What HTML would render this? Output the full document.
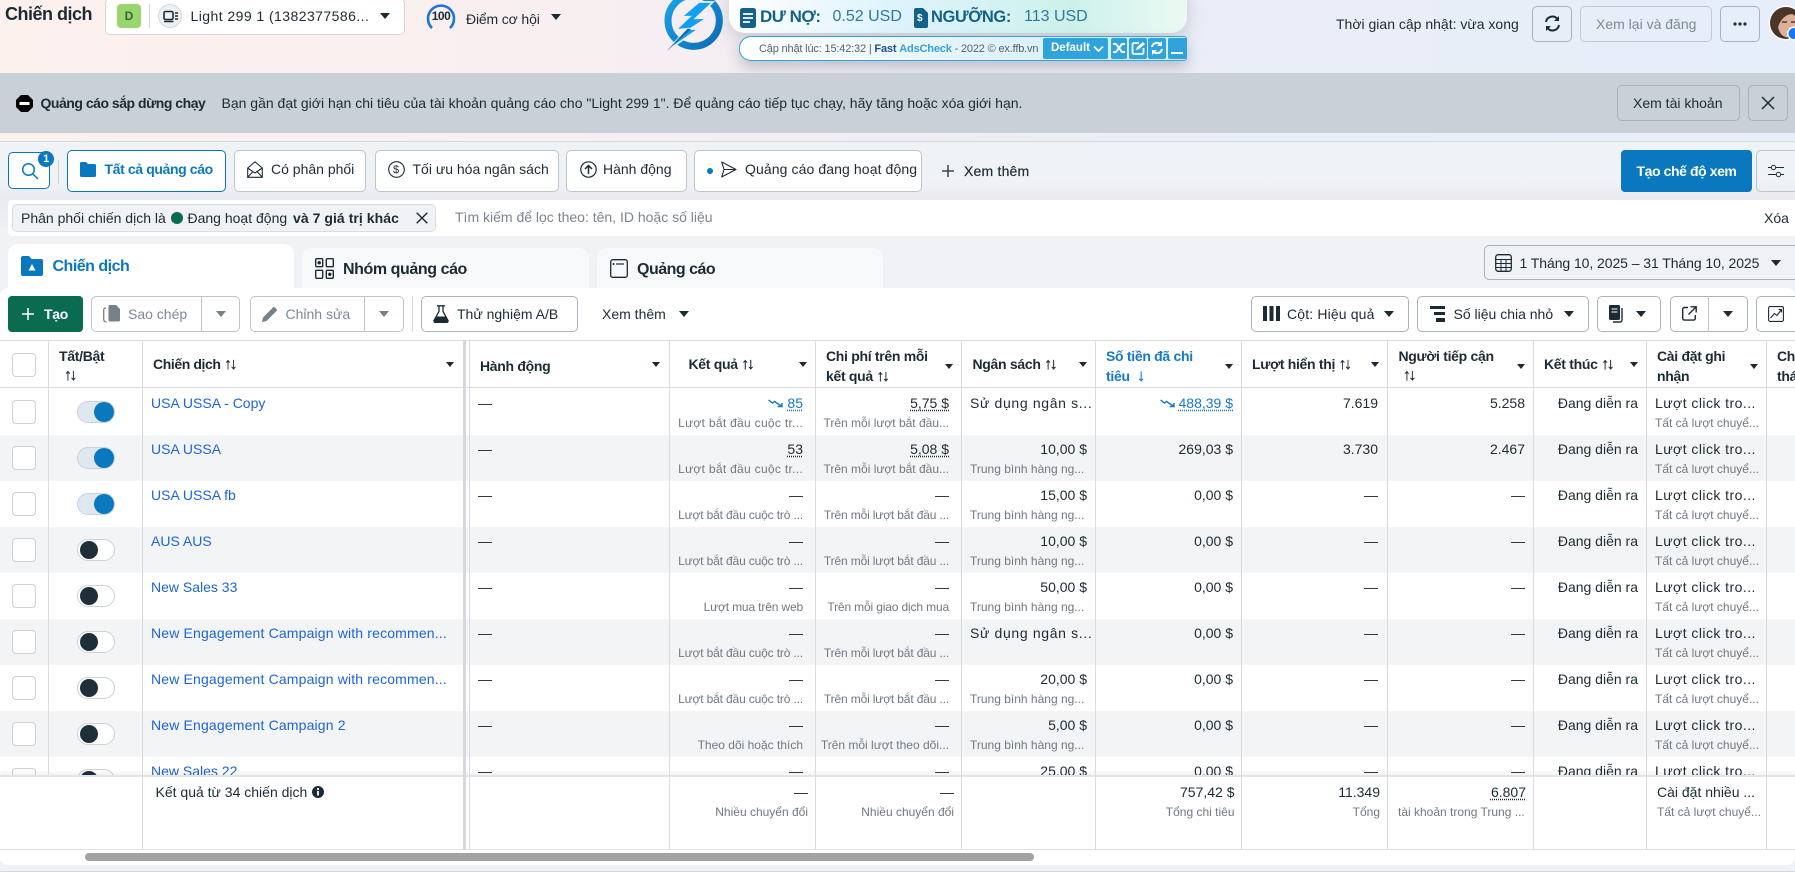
<!DOCTYPE html>
<html lang="vi"><head><meta charset="utf-8"><title>Chiến dịch</title>
<style>
*{box-sizing:border-box}
html,body{margin:0;padding:0}
body{width:1795px;height:872px;overflow:hidden;position:relative;font-family:"Liberation Sans","Noto Sans CJK SC",sans-serif;font-size:14px;color:#1c2b33;background:#f0f2f5}
.abs,.t,.b,svg.i,.ar{position:absolute}
.t{white-space:nowrap;line-height:20px}
.bd{font-weight:700;letter-spacing:-.3px}
.b{border:1px solid #bcc4cc;border-radius:5px;background:#fff}
.ar{width:0;height:0;border-left:5.5px solid transparent;border-right:5.5px solid transparent;border-top:6px solid #1c2b33}
.ar.s{border-left-width:4.5px;border-right-width:4.5px;border-top-width:5px}
.ar.g{border-top-color:#77818b}
.g{color:#7f8992}
.so{letter-spacing:-2.5px;font-weight:400;font-size:16px;line-height:1;-webkit-text-stroke:.3px #1c2b33}
.r{position:absolute;left:0;width:1795px;height:46px;background:#fff}
.r.e{background:#f3f4f6}
.r>*{position:absolute;white-space:nowrap}
.m{top:4px;line-height:20px}
.u{top:26px;line-height:16px;font-size:12px;color:#6f7982}
.c{left:12px;top:11px;width:24px;height:24px;border:1px solid #ccd2d8;border-radius:4px;background:#fff}
.tg{left:77px;top:12px;width:38px;height:22px;border-radius:11px;border:1px solid #cbd2d9;background:#fff}
.tg i{position:absolute;top:1px;left:2px;width:18px;height:18px;border-radius:50%;background:#1f2f3a}
.tg.on{background:#dfe8f1}
.tg.on i{left:16px;width:20px;height:20px;top:0;background:#0a78be}
.r.f .m{top:5px}.r.f .u{top:27px}.r.f .c{top:12px}.r.f .tg{top:13px}
.n{left:151px;color:#1d64d8}
.ne{letter-spacing:.16px}
.d{left:478px}
.c1{right:992px}.c2{right:846px}.c3{right:708px}.c4{right:562px}.c5{right:417px}.c6{right:270px}.c7{right:157px}
.l3{left:970px}.l8{left:1655px}
.m.l3{letter-spacing:.65px}
.m.l8{letter-spacing:.45px}
.w{letter-spacing:.3px}
.v{letter-spacing:-.15px}
u{text-decoration:underline dotted;text-underline-offset:2px}
.bl{color:#1878c8}
.ln{position:absolute;top:340px;height:510px;width:1px;background:#d9dce0;z-index:5}
.ft{position:absolute;white-space:nowrap;line-height:20px;z-index:4}
.fs{position:absolute;white-space:nowrap;line-height:16px;font-size:12px;color:#6f7982;z-index:4}
</style></head><body>

<!-- top gradient -->
<div class="abs" style="left:0;top:0;width:1795px;height:141px;background:linear-gradient(90deg,#fdf1ee 0,#f9eff0 30%,#f0edf5 50%,#eaeef8 70%,#e6eef9 100%)"></div>

<div class="t bd" style="left:5px;top:3px;font-size:18px;line-height:22px;letter-spacing:-.5px">Chiến dịch</div>

<div class="b" style="left:105px;top:-2px;width:300px;height:37px;border-radius:5px;border-color:#d3d8de"></div>
<div class="abs" style="left:117px;top:4px;width:24px;height:24px;border-radius:4px;background:#9ad56e;color:#2f6b3a;font-weight:700;font-size:12px;text-align:center;line-height:24px">D</div>
<div class="abs" style="left:149px;top:4px;width:1px;height:24px;background:#d3d8de"></div>
<div class="abs" style="left:158px;top:4px;width:24px;height:24px;border-radius:50%;background:#edf0f3;border:1px solid #d3d8de"></div>
<svg class="i" style="left:163px;top:10px" width="15" height="13" viewBox="0 0 15 13"><rect x="1" y="1.500" width="9" height="8" rx="1.500" fill="none" stroke="#1c2b33" stroke-width="1.600"/><path d="M1 11.500h9.500M12 3h3M12 6h3M12 9h3" stroke="#1c2b33" stroke-width="1.400"/></svg>
<div class="t" style="left:190.500px;top:6px;letter-spacing:.44px">Light 299 1 (1382377586...</div>
<div class="ar" style="left:380px;top:13px"></div>

<svg class="i" style="left:426px;top:0" width="30" height="32" viewBox="0 0 30 32"><path d="M6 28 A13 13 0 1 1 24 28" fill="none" stroke="#1877d8" stroke-width="2.600"/></svg>
<div class="t bd" style="left:429px;top:6px;width:24px;text-align:center;font-size:12px;letter-spacing:-.5px">100</div>
<div class="t" style="left:466px;top:9px;letter-spacing:-.15px">Điểm cơ hội</div>
<div class="ar" style="left:551px;top:14px"></div>

<!-- bolt logo -->
<svg class="i" style="left:655px;top:0;z-index:3" width="80" height="56" viewBox="0 0 240 168">
<defs><linearGradient id="gr" x1="0" y1="0" x2="1" y2="1"><stop offset="0" stop-color="#1ba4ea"/><stop offset="1" stop-color="#0c6cb4"/></linearGradient></defs>
<circle cx="116" cy="62" r="77" fill="none" stroke="url(#gr)" stroke-width="21"/>
<path d="M132 6 L80 50 L104 50 L62 90 L98 86 L34 154 L132 86 L104 88 L156 54 L122 55 L174 6Z" fill="#12a0ee" stroke="#f1edf5" stroke-width="5" stroke-linejoin="miter"/>
<path d="M34 154 L98 86 L108 88Z" fill="#0c6cb4"/>
</svg>

<!-- panel -->
<div class="abs" style="left:729px;top:-10px;width:458px;height:43px;border-radius:0 0 16px 16px;background:linear-gradient(90deg,#fff 0,#dff3fd 35%,#cdf1ea 75%,#eafaf3 100%);box-shadow:0 6px 18px rgba(80,90,110,.25)"></div>
<svg class="i" style="left:740px;top:8px" width="16" height="20" viewBox="0 0 16 20"><rect width="16" height="20" rx="2.500" fill="#14628a"/><path d="M3 6h10M3 10h10M3 14h7" stroke="#fff" stroke-width="1.800"/></svg>
<div class="t bd" style="left:760px;top:7px;font-size:17px;color:#14628a;letter-spacing:-.5px">DƯ NỢ:</div>
<div class="t" style="left:832.500px;top:7px;font-size:16px;color:#2b7a9f">0.52 USD</div>
<svg class="i" style="left:914px;top:8px" width="14" height="20" viewBox="0 0 14 20"><path d="M2 0h7l5 5v13a2 2 0 0 1-2 2H2a2 2 0 0 1-2-2V2a2 2 0 0 1 2-2z" fill="#14628a"/></svg>
<div class="t" style="left:917px;top:12px;font-size:10px;line-height:14px;color:#fff;font-weight:700">$</div>
<div class="t bd" style="left:931px;top:7px;font-size:16.500px;color:#14628a;letter-spacing:-.4px">NGƯỠNG:</div>
<div class="t" style="left:1024px;top:7px;font-size:16px;color:#2b7a9f">113 USD</div>

<!-- adscheck bar -->
<div class="abs" style="left:738.500px;top:36px;width:448.500px;height:25px;border:1.500px solid #2fa3dc;border-radius:12px 3px 3px 12px;background:linear-gradient(90deg,#fff 0,#dff2fb 60%,#d3edf9 100%);box-shadow:0 7px 14px rgba(80,90,110,.3)"></div>
<div class="t" style="left:759px;top:39px;font-size:11px;color:#56626d;letter-spacing:-.17px">Cập nhật lúc: 15:42:32 | <b style="color:#23527c">Fast</b> <b style="color:#2fa3dc">AdsCheck</b> - 2022 © ex.ffb.vn</div>
<div class="abs" style="left:1043px;top:38px;width:65px;height:21px;background:#2fa3dc;border-radius:2px;color:#fff;font-size:11.500px;font-weight:700;line-height:20px;padding-left:8px">Default</div>
<svg class="i" style="left:1093px;top:45px" width="11" height="8" viewBox="0 0 11 8"><path d="M1 1.500l4.500 4.500 4.500-4.500" fill="none" stroke="#fff" stroke-width="1.800"/></svg>
<div class="abs" style="left:1111px;top:38px;width:15.500px;height:21px;background:#2fa3dc;border-radius:2px"></div>
<svg class="i" style="left:1112px;top:41px" width="14" height="14" viewBox="0 0 14 14"><path d="M1 3h3l6 8h3M1 11h3l6-8h3" fill="none" stroke="#fff" stroke-width="2"/></svg>
<div class="abs" style="left:1128.500px;top:38px;width:18px;height:21px;background:#2fa3dc;border-radius:2px"></div>
<svg class="i" style="left:1131px;top:41px" width="14" height="14" viewBox="0 0 14 14"><path d="M8 2H3a1.500 1.500 0 0 0-1.500 1.500v8A1.500 1.500 0 0 0 3 13h8a1.500 1.500 0 0 0 1.500-1.500V7" fill="none" stroke="#fff" stroke-width="1.800"/><path d="M5 9l1-3 6-5 2 2-6 5z" fill="#fff"/></svg>
<div class="abs" style="left:1148px;top:38px;width:18px;height:21px;background:#2fa3dc;border-radius:2px"></div>
<svg class="i" style="left:1150px;top:41px" width="14" height="14" viewBox="0 0 14 14"><path d="M2 6a5 5 0 0 1 9-2M12 8a5 5 0 0 1-9 2" fill="none" stroke="#fff" stroke-width="2"/><path d="M12 0v5H7zM2 14V9h5z" fill="#fff"/></svg>
<div class="abs" style="left:1168px;top:38px;width:18.500px;height:21px;background:#2fa3dc;border-radius:2px"></div>
<div class="abs" style="left:1171px;top:52px;width:12px;height:2px;background:#fff"></div>

<!-- top right -->
<div class="t" style="left:1336px;top:14px">Thời gian cập nhật: vừa xong</div>
<div class="b" style="left:1532px;top:6px;width:40px;height:36px;background:transparent;border-color:#aab3bc"></div>
<svg class="i" style="left:1544px;top:15px" width="17" height="17" viewBox="0 0 17 17"><path d="M2 7a6.500 6.500 0 0 1 11.500-3M15 10a6.500 6.500 0 0 1-11.500 3" fill="none" stroke="#1c2b33" stroke-width="2"/><path d="M15 1v5h-5zM2 16v-5h5z" fill="#1c2b33"/></svg>
<div class="b" style="left:1580px;top:6px;width:132px;height:36px;background:transparent;border-color:#c3cad2"></div>
<div class="t g" style="left:1596px;top:14px">Xem lại và đăng</div>
<div class="b" style="left:1720px;top:6px;width:40px;height:36px;background:transparent;border-color:#aab3bc"></div>
<svg class="i" style="left:1733px;top:22px" width="14" height="4" viewBox="0 0 14 4"><circle cx="2" cy="2" r="1.600" fill="#1c2b33"/><circle cx="7" cy="2" r="1.600" fill="#1c2b33"/><circle cx="12" cy="2" r="1.600" fill="#1c2b33"/></svg>
<svg class="i" style="left:1768px;top:5px" width="27" height="38" viewBox="0 0 27 38"><circle cx="18" cy="18" r="17.500" fill="#fff"/><circle cx="18" cy="18" r="16" fill="#4a3427"/><ellipse cx="20" cy="20" rx="10" ry="12.500" fill="#dcb199"/><path d="M3 18C5 4 26 0 31 12 25 7 15 8 10 22 8 26 5 26 3 18z" fill="#4d3525"/><path d="M14 17h5M23 17h5" stroke="#5b3a27" stroke-width="1.500"/><circle cx="26" cy="28.500" r="7" fill="#fff"/><circle cx="26" cy="28.500" r="5.500" fill="#1877f2"/></svg>

<!-- banner -->
<div class="abs" style="left:0;top:73px;width:1795px;height:60px;background:#c9d0d8"></div>
<svg class="i" style="left:16px;top:95px" width="17" height="17" viewBox="0 0 17 17"><path d="M5 0h7l5 5v7l-5 5H5l-5-5V5z" fill="#000"/><rect x="3.500" y="7" width="10" height="3" fill="#fff"/></svg>
<div class="t bd" style="left:40.500px;top:93px;letter-spacing:-.48px">Quảng cáo sắp dừng chạy</div>
<div class="t" style="left:221.500px;top:93px">Bạn gần đạt giới hạn chi tiêu của tài khoản quảng cáo cho "Light 299 1". Để quảng cáo tiếp tục chạy, hãy tăng hoặc xóa giới hạn.</div>
<div class="b" style="left:1617px;top:85px;width:123px;height:36px;background:transparent;border-color:#aab3bc"></div>
<div class="t" style="left:1633px;top:93px">Xem tài khoản</div>
<div class="b" style="left:1748px;top:85px;width:40px;height:36px;background:transparent;border-color:#aab3bc"></div>
<svg class="i" style="left:1761px;top:96px" width="14" height="14" viewBox="0 0 14 14"><path d="M1 1l12 12M13 1L1 13" stroke="#1c2b33" stroke-width="1.500"/></svg>

<!-- toolbar section -->
<div class="abs" style="left:0;top:141px;width:1795px;height:147px;background:linear-gradient(180deg,#f0f3f6 0,#f0f3f6 25%,#e9ebf2 40%,#f0f2f5 65%,#f0f2f5 100%);border-top:1px solid #d5d9de"></div>

<div class="b" style="left:8px;top:152px;width:42px;height:37px;border-color:#0a78be;background:#fff"></div>
<svg class="i" style="left:21px;top:162px" width="18" height="18" viewBox="0 0 18 18"><circle cx="7.500" cy="7.500" r="5.800" fill="none" stroke="#0a78be" stroke-width="1.500"/><path d="M12 12l5 5" stroke="#0a78be" stroke-width="1.500"/></svg>
<div class="abs bd" style="left:38px;top:151px;width:16px;height:16px;border-radius:50%;background:#0a78be;color:#fff;font-size:11px;line-height:16px;text-align:center">1</div>
<div class="abs" style="left:58px;top:160px;width:1px;height:24px;background:#d0d5db"></div>

<div class="b" style="left:67px;top:150px;width:159px;height:42px;border-color:#0a78be"></div>
<svg class="i" style="left:80px;top:162px" width="16" height="15" viewBox="0 0 16 15"><path d="M1.500 0H6l2 2h6.500A1.500 1.500 0 0 1 16 3.500v10a1.500 1.500 0 0 1-1.500 1.500h-13A1.500 1.500 0 0 1 0 13.500v-12A1.500 1.500 0 0 1 1.500 0z" fill="#0a78be"/></svg>
<div class="t bd" style="left:104.500px;top:159px;color:#0a78be;letter-spacing:-.38px">Tất cả quảng cáo</div>

<div class="b" style="left:234px;top:150px;width:132px;height:42px"></div>
<svg class="i" style="left:247px;top:161px" width="16" height="17" viewBox="0 0 16 17"><path d="M.7 7L8 .8 15.300 7v9.300H.7zM.7 7l7.300 5 7.300-5M.7 16.300L6 10.500M15.300 16.300L10 10.500" fill="none" stroke="#1c2b33" stroke-width="1.100"/></svg>
<div class="t" style="left:271px;top:159px">Có phân phối</div>

<div class="b" style="left:375px;top:150px;width:184px;height:42px"></div>
<svg class="i" style="left:388px;top:161px" width="17" height="17" viewBox="0 0 17 17"><circle cx="8.500" cy="8.500" r="7.800" fill="none" stroke="#1c2b33" stroke-width="1.100"/></svg>
<div class="t" style="left:393px;top:160px;font-size:11px">$</div>
<div class="t" style="left:412.500px;top:159px">Tối ưu hóa ngân sách</div>

<div class="b" style="left:565.500px;top:150px;width:121.500px;height:42px"></div>
<svg class="i" style="left:580px;top:161px" width="17" height="17" viewBox="0 0 17 17"><circle cx="8.500" cy="8.500" r="7.700" fill="none" stroke="#1c2b33" stroke-width="1.200"/><path d="M8.500 13V5M5 8l3.500-3.500L12 8" fill="none" stroke="#1c2b33" stroke-width="1.500"/></svg>
<div class="t" style="left:603px;top:159px">Hành động</div>

<div class="b" style="left:694px;top:150px;width:227.500px;height:42px"></div>
<div class="abs" style="left:707px;top:168px;width:6px;height:6px;border-radius:50%;background:#0a78be"></div>
<svg class="i" style="left:721px;top:161px" width="16" height="17" viewBox="0 0 16 17"><path d="M.7 1L15 8.500.7 16l2.300-7.500zM3 8.500h12" fill="none" stroke="#1c2b33" stroke-width="1.100" stroke-linejoin="round"/></svg>
<div class="t" style="left:745px;top:159px;letter-spacing:.1px">Quảng cáo đang hoạt động</div>

<svg class="i" style="left:942px;top:165px" width="12" height="12" viewBox="0 0 12 12"><path d="M6 0v12M0 6h12" stroke="#1c2b33" stroke-width="1.300"/></svg>
<div class="t" style="left:964px;top:161px;letter-spacing:.2px;-webkit-text-stroke:.2px #1c2b33">Xem thêm</div>

<div class="abs bd" style="left:1621px;top:150px;width:131px;height:42px;border-radius:4px;background:#0a78be;color:#fff;text-align:center;line-height:42px;letter-spacing:-.42px">Tạo chế độ xem</div>
<div class="b" style="left:1756px;top:150px;width:44px;height:42px;background:transparent"></div>
<svg class="i" style="left:1768px;top:164px" width="16" height="14" viewBox="0 0 16 14"><path d="M0 3.500h3M8 3.500h8M0 10.500h8M13 10.500h3" stroke="#1c2b33" stroke-width="1"/><circle cx="5.500" cy="3.500" r="2.200" fill="none" stroke="#1c2b33"/><circle cx="10.500" cy="10.500" r="2.200" fill="none" stroke="#1c2b33"/></svg>

<!-- filter -->
<div class="abs" style="left:8px;top:200px;width:1787px;height:36px;background:#fff;border-radius:4px 0 0 4px"></div>
<div class="abs" style="left:12px;top:204px;width:424px;height:28px;background:#f0f2f5;border:1px solid #dadde1;border-radius:5px"></div>
<div class="t" style="left:21px;top:208px">Phân phối chiến dịch là</div>
<div class="abs" style="left:171px;top:212px;width:12px;height:12px;border-radius:50%;background:#0a6b4e"></div>
<div class="t" style="left:187.500px;top:208px">Đang hoạt động</div>
<div class="t bd" style="left:293px;top:208px;letter-spacing:.05px">và 7 giá trị khác</div>
<svg class="i" style="left:416px;top:212px" width="12" height="12" viewBox="0 0 12 12"><path d="M.7.7l10.600 10.600M11.300.7L.7 11.300" stroke="#1c2b33" stroke-width="1.400"/></svg>
<div class="t" style="left:455px;top:207px;color:#7b8590">Tìm kiếm để lọc theo: tên, ID hoặc số liệu</div>
<div class="t" style="left:1764px;top:208px">Xóa</div>

<!-- main tabs -->
<div class="abs" style="left:8px;top:244px;width:286px;height:50px;background:#fff;border-radius:10px 10px 0 0"></div>
<svg class="i" style="left:21px;top:256px" width="22" height="20" viewBox="0 0 22 20"><path d="M2 0h6l2.500 3H20a2 2 0 0 1 2 2v13a2 2 0 0 1-2 2H2a2 2 0 0 1-2-2V2a2 2 0 0 1 2-2z" fill="#0a78be"/><path d="M11 8l3.500 6.500h-7z" fill="#fff"/></svg>
<div class="t bd" style="left:52.500px;top:257px;font-size:16px;color:#0a78be;letter-spacing:-.5px">Chiến dịch</div>
<div class="abs" style="left:302px;top:248px;width:286.500px;height:46px;background:#f8f9fb;border-radius:10px 10px 0 0"></div>
<svg class="i" style="left:315px;top:258px" width="19" height="21" viewBox="0 0 19 21"><g fill="none" stroke="#1c2b33" stroke-width="1.400"><rect x=".7" y=".7" width="7" height="8" rx="1"/><rect x="11.300" y=".7" width="7" height="8" rx="1"/><rect x=".7" y="12.300" width="7" height="8" rx="1"/><rect x="11.300" y="12.300" width="7" height="8" rx="1"/></g><circle cx="4.200" cy="4.700" r="1.700" fill="#1c2b33"/><circle cx="14.800" cy="16.300" r="1.700" fill="#1c2b33"/></svg>
<div class="t bd" style="left:343px;top:260px;font-size:16px;letter-spacing:-.42px">Nhóm quảng cáo</div>
<div class="abs" style="left:597px;top:248px;width:286px;height:46px;background:#f8f9fb;border-radius:10px 10px 0 0"></div>
<svg class="i" style="left:610px;top:259px" width="18" height="19" viewBox="0 0 18 19"><rect x=".7" y=".7" width="16.600" height="17.600" rx="2" fill="none" stroke="#1c2b33" stroke-width="1.300"/><path d="M6 5h8" stroke="#1c2b33" stroke-width="1.200"/><circle cx="3.500" cy="5" r="1" fill="#1c2b33"/></svg>
<div class="t bd" style="left:637px;top:260px;font-size:16px;letter-spacing:-.5px">Quảng cáo</div>
<div class="b" style="left:1483.500px;top:245px;width:320px;height:35px;background:transparent;border-color:#aab3bc"></div>
<svg class="i" style="left:1495px;top:254px" width="17" height="18" viewBox="0 0 17 18"><rect x=".7" y=".7" width="15.600" height="16.600" rx="2.500" fill="none" stroke="#1c2b33" stroke-width="1.300"/><path d="M1 5.500h15M1 9.500h15M1 13.500h15M6 5.500v12M11 5.500v12" stroke="#1c2b33" stroke-width="1"/></svg>
<div class="t" style="left:1519.500px;top:253px;letter-spacing:-.07px">1 Tháng 10, 2025 – 31 Tháng 10, 2025</div>
<div class="ar" style="left:1771px;top:260px"></div>

<!-- white content -->
<div class="abs" style="left:0;top:288px;width:1795px;height:577px;background:#fff;border-radius:8px"></div>

<!-- action row -->
<div class="abs" style="left:8px;top:296px;width:75px;height:36px;border-radius:4px;background:#0a6b4e"></div>
<svg class="i" style="left:21.500px;top:308px" width="12" height="12" viewBox="0 0 12 12"><path d="M6 0v12M0 6h12" stroke="#fff" stroke-width="1.500"/></svg>
<div class="t bd" style="left:44px;top:304px;color:#fff">Tạo</div>

<div class="b" style="left:91px;top:296px;width:149px;height:36px"></div>
<div class="abs" style="left:201px;top:296px;width:1px;height:36px;background:#bcc4cc"></div>
<svg class="i" style="left:103px;top:305px" width="18" height="18" viewBox="0 0 18 18"><path d="M7 0h6l4 4v11a1.500 1.500 0 0 1-1.500 1.500H7a1.500 1.500 0 0 1-1.500-1.500V1.500A1.500 1.500 0 0 1 7 0z" fill="#77818b"/><path d="M3 3C1 3 .7 4 .7 5v9c0 2 1 3 3 3" fill="none" stroke="#77818b" stroke-width="1.300"/></svg>
<div class="t g" style="left:128px;top:304px">Sao chép</div>
<div class="ar g" style="left:215.500px;top:311px"></div>

<div class="b" style="left:249.500px;top:296px;width:154px;height:36px"></div>
<div class="abs" style="left:364px;top:296px;width:1px;height:36px;background:#bcc4cc"></div>
<svg class="i" style="left:262px;top:306px" width="16" height="16" viewBox="0 0 16 16"><path d="M0 16l1-4.500L11 1.500a1.500 1.500 0 0 1 2 0l1.500 1.500a1.500 1.500 0 0 1 0 2L4.500 15z" fill="#77818b"/></svg>
<div class="t g" style="left:285.500px;top:304px">Chỉnh sửa</div>
<div class="ar g" style="left:378.500px;top:311px"></div>
<div class="abs" style="left:412px;top:296px;width:1px;height:36px;background:#d8dce0"></div>

<div class="b" style="left:421px;top:296px;width:157px;height:36px;border-color:#aab3bc"></div>
<svg class="i" style="left:433px;top:305px" width="16" height="18" viewBox="0 0 16 18"><path d="M4 .8h8M6 1v5.500L1 15.500A1.500 1.500 0 0 0 2.300 17.500h11.400A1.500 1.500 0 0 0 15 15.500L10 6.500V1" fill="none" stroke="#1c2b33" stroke-width="1.300"/><path d="M3.500 11.500h9L15 16a1 1 0 0 1-1 1.500H2A1 1 0 0 1 1 16z" fill="#1c2b33"/></svg>
<div class="t" style="left:457px;top:304px">Thử nghiệm A/B</div>
<div class="t" style="left:602px;top:304px">Xem thêm</div>
<div class="ar" style="left:678.500px;top:311px"></div>

<div class="b" style="left:1251px;top:296px;width:158px;height:36px;border-color:#aab3bc"></div>
<svg class="i" style="left:1262.500px;top:306px" width="17" height="15" viewBox="0 0 17 15"><path d="M0 0h4v15H0zM6.500 0h4v15h-4zM13 0h4v15h-4z" fill="#1c2b33"/></svg>
<div class="t" style="left:1287px;top:304px;letter-spacing:.15px">Cột: Hiệu quả</div>
<div class="ar" style="left:1383.500px;top:311px"></div>

<div class="b" style="left:1417px;top:296px;width:172px;height:36px;border-color:#aab3bc"></div>
<svg class="i" style="left:1430px;top:306px" width="15" height="16" viewBox="0 0 15 16"><path d="M0 0h15v3H0zM4 6h11v3H4zM6 12h9v4H6z" fill="#1c2b33"/></svg>
<div class="t" style="left:1453.500px;top:304px">Số liệu chia nhỏ</div>
<div class="ar" style="left:1563.500px;top:311px"></div>

<div class="b" style="left:1597px;top:296px;width:64px;height:36px;border-color:#aab3bc"></div>
<svg class="i" style="left:1609px;top:305px" width="16" height="18" viewBox="0 0 16 18"><rect x="0" y="0" width="11" height="15" rx="1.500" fill="#1c2b33"/><path d="M2.500 4h6M2.500 7h6" stroke="#fff"/><path d="M13 3v12a2 2 0 0 1-2 2H4" fill="none" stroke="#1c2b33" stroke-width="1.400"/></svg>
<div class="ar" style="left:1635.500px;top:311px"></div>

<div class="b" style="left:1669.500px;top:296px;width:78px;height:36px;border-color:#aab3bc"></div>
<div class="abs" style="left:1708px;top:296px;width:1px;height:36px;background:#bcc4cc"></div>
<svg class="i" style="left:1682px;top:306px" width="15" height="15" viewBox="0 0 15 15"><path d="M6 1.500H2.500a1.800 1.800 0 0 0-1.800 1.800v9a1.800 1.800 0 0 0 1.800 1.800h9a1.800 1.800 0 0 0 1.800-1.800V9M8.500.8h5.700v5.700M14 1L6.500 8.500" fill="none" stroke="#1c2b33" stroke-width="1.400"/></svg>
<div class="ar" style="left:1722.500px;top:311px"></div>

<div class="b" style="left:1756px;top:296px;width:44px;height:36px;border-color:#aab3bc"></div>
<svg class="i" style="left:1768px;top:306px" width="16" height="16" viewBox="0 0 16 16"><rect x=".6" y=".6" width="14.800" height="14.800" rx="1.500" fill="none" stroke="#1c2b33" stroke-width="1.100"/><path d="M2.500 12l4-4.500 2.500 2 4.500-6M10.500 3.500h3v3" fill="none" stroke="#1c2b33" stroke-width="1.100"/></svg>

<!-- table header -->
<div class="abs" style="left:0;top:340px;width:1795px;height:48px;border-top:1px solid #d9dce0;border-bottom:1px solid #d9dce0;background:#fff"></div>
<div class="c abs" style="top:353px"></div>
<div class="t bd" style="left:59px;top:346px">Tất/Bật</div>
<div class="t so" style="left:64px;top:366px;line-height:20px">↑↓</div>
<div class="t bd" style="left:153px;top:354px;letter-spacing:-.4px">Chiến dịch <span class="so">↑↓</span></div>
<div class="ar s" style="left:446px;top:362px"></div>
<div class="t bd" style="left:480px;top:356px">Hành động</div>
<div class="ar s" style="left:652px;top:362px"></div>
<div class="t bd" style="left:688.500px;top:354px">Kết quả <span class="so">↑↓</span></div>
<div class="ar s" style="left:799px;top:362px"></div>
<div class="t bd" style="left:826px;top:346px">Chi phí trên mỗi</div>
<div class="t bd" style="left:826px;top:366px">kết quả <span class="so">↑↓</span></div>
<div class="ar s" style="left:945px;top:364px"></div>
<div class="t bd" style="left:972.500px;top:354px">Ngân sách <span class="so">↑↓</span></div>
<div class="ar s" style="left:1079px;top:362px"></div>
<div class="t bd" style="left:1106px;top:346px;color:#1878c8">Số tiền đã chi</div>
<div class="t bd" style="left:1106px;top:366px;color:#1878c8">tiêu&nbsp; <span style="font-size:17px;font-weight:400;line-height:1;-webkit-text-stroke:.3px #1878c8">↓</span></div>
<div class="ar s" style="left:1225px;top:364px"></div>
<div class="t bd" style="left:1252px;top:354px">Lượt hiển thị <span class="so">↑↓</span></div>
<div class="ar s" style="left:1371px;top:362px"></div>
<div class="t bd" style="left:1398.500px;top:346px">Người tiếp cận</div>
<div class="t so" style="left:1403px;top:366px;line-height:20px">↑↓</div>
<div class="ar s" style="left:1517px;top:364px"></div>
<div class="t bd" style="left:1544px;top:354px">Kết thúc <span class="so">↑↓</span></div>
<div class="ar s" style="left:1630px;top:362px"></div>
<div class="t bd" style="left:1657px;top:346px">Cài đặt ghi</div>
<div class="t bd" style="left:1657px;top:366px">nhận</div>
<div class="ar s" style="left:1750px;top:364px"></div>
<div class="t bd" style="left:1777px;top:346px">Ch</div>
<div class="t bd" style="left:1777px;top:366px">thá</div>

<!-- rows -->
<div class="abs" style="left:0;top:388px;width:1795px;height:387px;overflow:hidden">

<div class="r f" style="top:0;height:47px"><div class="c"></div><div class="tg on"><i></i></div><span class="m n">USA USSA - Copy</span><span class="m d">—</span>
<span class="m c1 bl"><svg width="15" height="9" viewBox="0 0 15 9" style="margin-right:4px"><path d="M.5 1l4 3 2-1.500 7 4.500M9.500 7.500h4.500v-3.500" fill="none" stroke="#1878c8" stroke-width="1.400"/></svg><u>85</u></span><span class="u c1 w">Lượt bắt đầu cuộc tr...</span>
<span class="m c2"><u>5,75 $</u></span><span class="u c2">Trên mỗi lượt bắt đầu...</span><span class="m l3">Sử dụng ngân s...</span>
<span class="m c4 bl"><svg width="15" height="9" viewBox="0 0 15 9" style="margin-right:4px"><path d="M.5 1l4 3 2-1.500 7 4.500M9.500 7.500h4.500v-3.500" fill="none" stroke="#1878c8" stroke-width="1.400"/></svg><u>488,39 $</u></span>
<span class="m c5">7.619</span><span class="m c6">5.258</span><span class="m c7">Đang diễn ra</span><span class="m l8">Lượt click tro...</span><span class="u l8">Tất cả lượt chuyể...</span></div>

<div class="r e" style="top:47px"><div class="c"></div><div class="tg on"><i></i></div><span class="m n">USA USSA</span><span class="m d">—</span>
<span class="m c1"><u>53</u></span><span class="u c1 w">Lượt bắt đầu cuộc tr...</span><span class="m c2"><u>5,08 $</u></span><span class="u c2">Trên mỗi lượt bắt đầu...</span>
<span class="m c3">10,00 $</span><span class="u l3">Trung bình hàng ng...</span><span class="m c4">269,03 $</span><span class="m c5">3.730</span><span class="m c6">2.467</span><span class="m c7">Đang diễn ra</span><span class="m l8">Lượt click tro...</span><span class="u l8">Tất cả lượt chuyể...</span></div>

<div class="r" style="top:93px"><div class="c"></div><div class="tg on"><i></i></div><span class="m n">USA USSA fb</span><span class="m d">—</span>
<span class="m c1">—</span><span class="u c1 v">Lượt bắt đầu cuộc trò ...</span><span class="m c2">—</span><span class="u c2 v">Trên mỗi lượt bắt đầu ...</span>
<span class="m c3">15,00 $</span><span class="u l3">Trung bình hàng ng...</span><span class="m c4">0,00 $</span><span class="m c5">—</span><span class="m c6">—</span><span class="m c7">Đang diễn ra</span><span class="m l8">Lượt click tro...</span><span class="u l8">Tất cả lượt chuyể...</span></div>

<div class="r e" style="top:139px"><div class="c"></div><div class="tg"><i></i></div><span class="m n">AUS AUS</span><span class="m d">—</span>
<span class="m c1">—</span><span class="u c1 v">Lượt bắt đầu cuộc trò ...</span><span class="m c2">—</span><span class="u c2 v">Trên mỗi lượt bắt đầu ...</span>
<span class="m c3">10,00 $</span><span class="u l3">Trung bình hàng ng...</span><span class="m c4">0,00 $</span><span class="m c5">—</span><span class="m c6">—</span><span class="m c7">Đang diễn ra</span><span class="m l8">Lượt click tro...</span><span class="u l8">Tất cả lượt chuyể...</span></div>

<div class="r" style="top:185px"><div class="c"></div><div class="tg"><i></i></div><span class="m n">New Sales 33</span><span class="m d">—</span>
<span class="m c1">—</span><span class="u c1 v">Lượt mua trên web</span><span class="m c2">—</span><span class="u c2 v">Trên mỗi giao dịch mua</span>
<span class="m c3">50,00 $</span><span class="u l3">Trung bình hàng ng...</span><span class="m c4">0,00 $</span><span class="m c5">—</span><span class="m c6">—</span><span class="m c7">Đang diễn ra</span><span class="m l8">Lượt click tro...</span><span class="u l8">Tất cả lượt chuyể...</span></div>

<div class="r e" style="top:231px"><div class="c"></div><div class="tg"><i></i></div><span class="m n ne">New Engagement Campaign with recommen...</span><span class="m d">—</span>
<span class="m c1">—</span><span class="u c1 v">Lượt bắt đầu cuộc trò ...</span><span class="m c2">—</span><span class="u c2 v">Trên mỗi lượt bắt đầu ...</span>
<span class="m l3">Sử dụng ngân s...</span><span class="m c4">0,00 $</span><span class="m c5">—</span><span class="m c6">—</span><span class="m c7">Đang diễn ra</span><span class="m l8">Lượt click tro...</span><span class="u l8">Tất cả lượt chuyể...</span></div>

<div class="r" style="top:277px"><div class="c"></div><div class="tg"><i></i></div><span class="m n ne">New Engagement Campaign with recommen...</span><span class="m d">—</span>
<span class="m c1">—</span><span class="u c1 v">Lượt bắt đầu cuộc trò ...</span><span class="m c2">—</span><span class="u c2 v">Trên mỗi lượt bắt đầu ...</span>
<span class="m c3">20,00 $</span><span class="u l3">Trung bình hàng ng...</span><span class="m c4">0,00 $</span><span class="m c5">—</span><span class="m c6">—</span><span class="m c7">Đang diễn ra</span><span class="m l8">Lượt click tro...</span><span class="u l8">Tất cả lượt chuyể...</span></div>

<div class="r e" style="top:323px"><div class="c"></div><div class="tg"><i></i></div><span class="m n ne">New Engagement Campaign 2</span><span class="m d">—</span>
<span class="m c1">—</span><span class="u c1">Theo dõi hoặc thích</span><span class="m c2">—</span><span class="u c2">Trên mỗi lượt theo dõi...</span>
<span class="m c3">5,00 $</span><span class="u l3">Trung bình hàng ng...</span><span class="m c4">0,00 $</span><span class="m c5">—</span><span class="m c6">—</span><span class="m c7">Đang diễn ra</span><span class="m l8">Lượt click tro...</span><span class="u l8">Tất cả lượt chuyể...</span></div>

<div class="r" style="top:369px"><div class="c"></div><div class="tg"><i></i></div><span class="m n">New Sales 22</span><span class="m d">—</span>
<span class="m c1">—</span><span class="m c2">—</span><span class="m c3">25,00 $</span><span class="m c4">0,00 $</span><span class="m c5">—</span><span class="m c6">—</span><span class="m c7">Đang diễn ra</span><span class="m l8">Lượt click tro...</span></div>
</div>

<!-- footer -->
<div class="abs" style="left:0;top:775px;width:1795px;height:75px;background:#fff;border-top:2px solid #e3e5e8;border-bottom:1px solid #dfe2e6;box-shadow:0 -3px 4px rgba(0,0,0,.05);z-index:3"></div>
<div class="ft" style="left:155.500px;top:782px">Kết quả từ 34 chiến dịch</div>
<svg class="i" style="left:312px;top:786px;z-index:4" width="12" height="12" viewBox="0 0 12 12"><circle cx="6" cy="6" r="6" fill="#1c2b33"/><path d="M6 5v4.500" stroke="#fff" stroke-width="1.800"/><circle cx="6" cy="3" r="1.100" fill="#fff"/></svg>
<div class="ft" style="right:987px;top:782px">—</div><div class="fs" style="right:987px;top:804px">Nhiều chuyển đổi</div>
<div class="ft" style="right:841px;top:782px">—</div><div class="fs" style="right:841px;top:804px">Nhiều chuyển đổi</div>
<div class="ft" style="right:560.500px;top:782px">757,42 $</div><div class="fs" style="right:560.500px;top:804px">Tổng chi tiêu</div>
<div class="ft" style="right:415px;top:782px">11.349</div><div class="fs" style="right:415px;top:804px">Tổng</div>
<div class="ft" style="right:269px;top:782px"><u>6.807</u></div><div class="fs" style="left:1398px;top:804px">tài khoản trong Trung ...</div>
<div class="ft" style="left:1657px;top:782px">Cài đặt nhiều ...</div><div class="fs" style="left:1657px;top:804px">Tất cả lượt chuyể...</div>

<!-- column lines -->
<div class="ln" style="left:48px;height:435px"></div>
<div class="ln" style="left:142px"></div>
<div class="ln" style="left:463px;width:3px;background:#d5d8dc"></div>
<div class="ln" style="left:469px"></div>
<div class="ln" style="left:669px"></div>
<div class="ln" style="left:815px"></div>
<div class="ln" style="left:961px"></div>
<div class="ln" style="left:1095px"></div>
<div class="ln" style="left:1241px"></div>
<div class="ln" style="left:1387px"></div>
<div class="ln" style="left:1533px"></div>
<div class="ln" style="left:1646px"></div>
<div class="ln" style="left:1766px"></div>

<!-- scrollbar -->
<div class="abs" style="left:85px;top:853px;width:949px;height:8px;border-radius:4px;background:#a3a3a3;z-index:6"></div>
<div class="abs" style="left:0;top:871px;width:1795px;height:1px;background:#d5d9de"></div>
</body></html>
